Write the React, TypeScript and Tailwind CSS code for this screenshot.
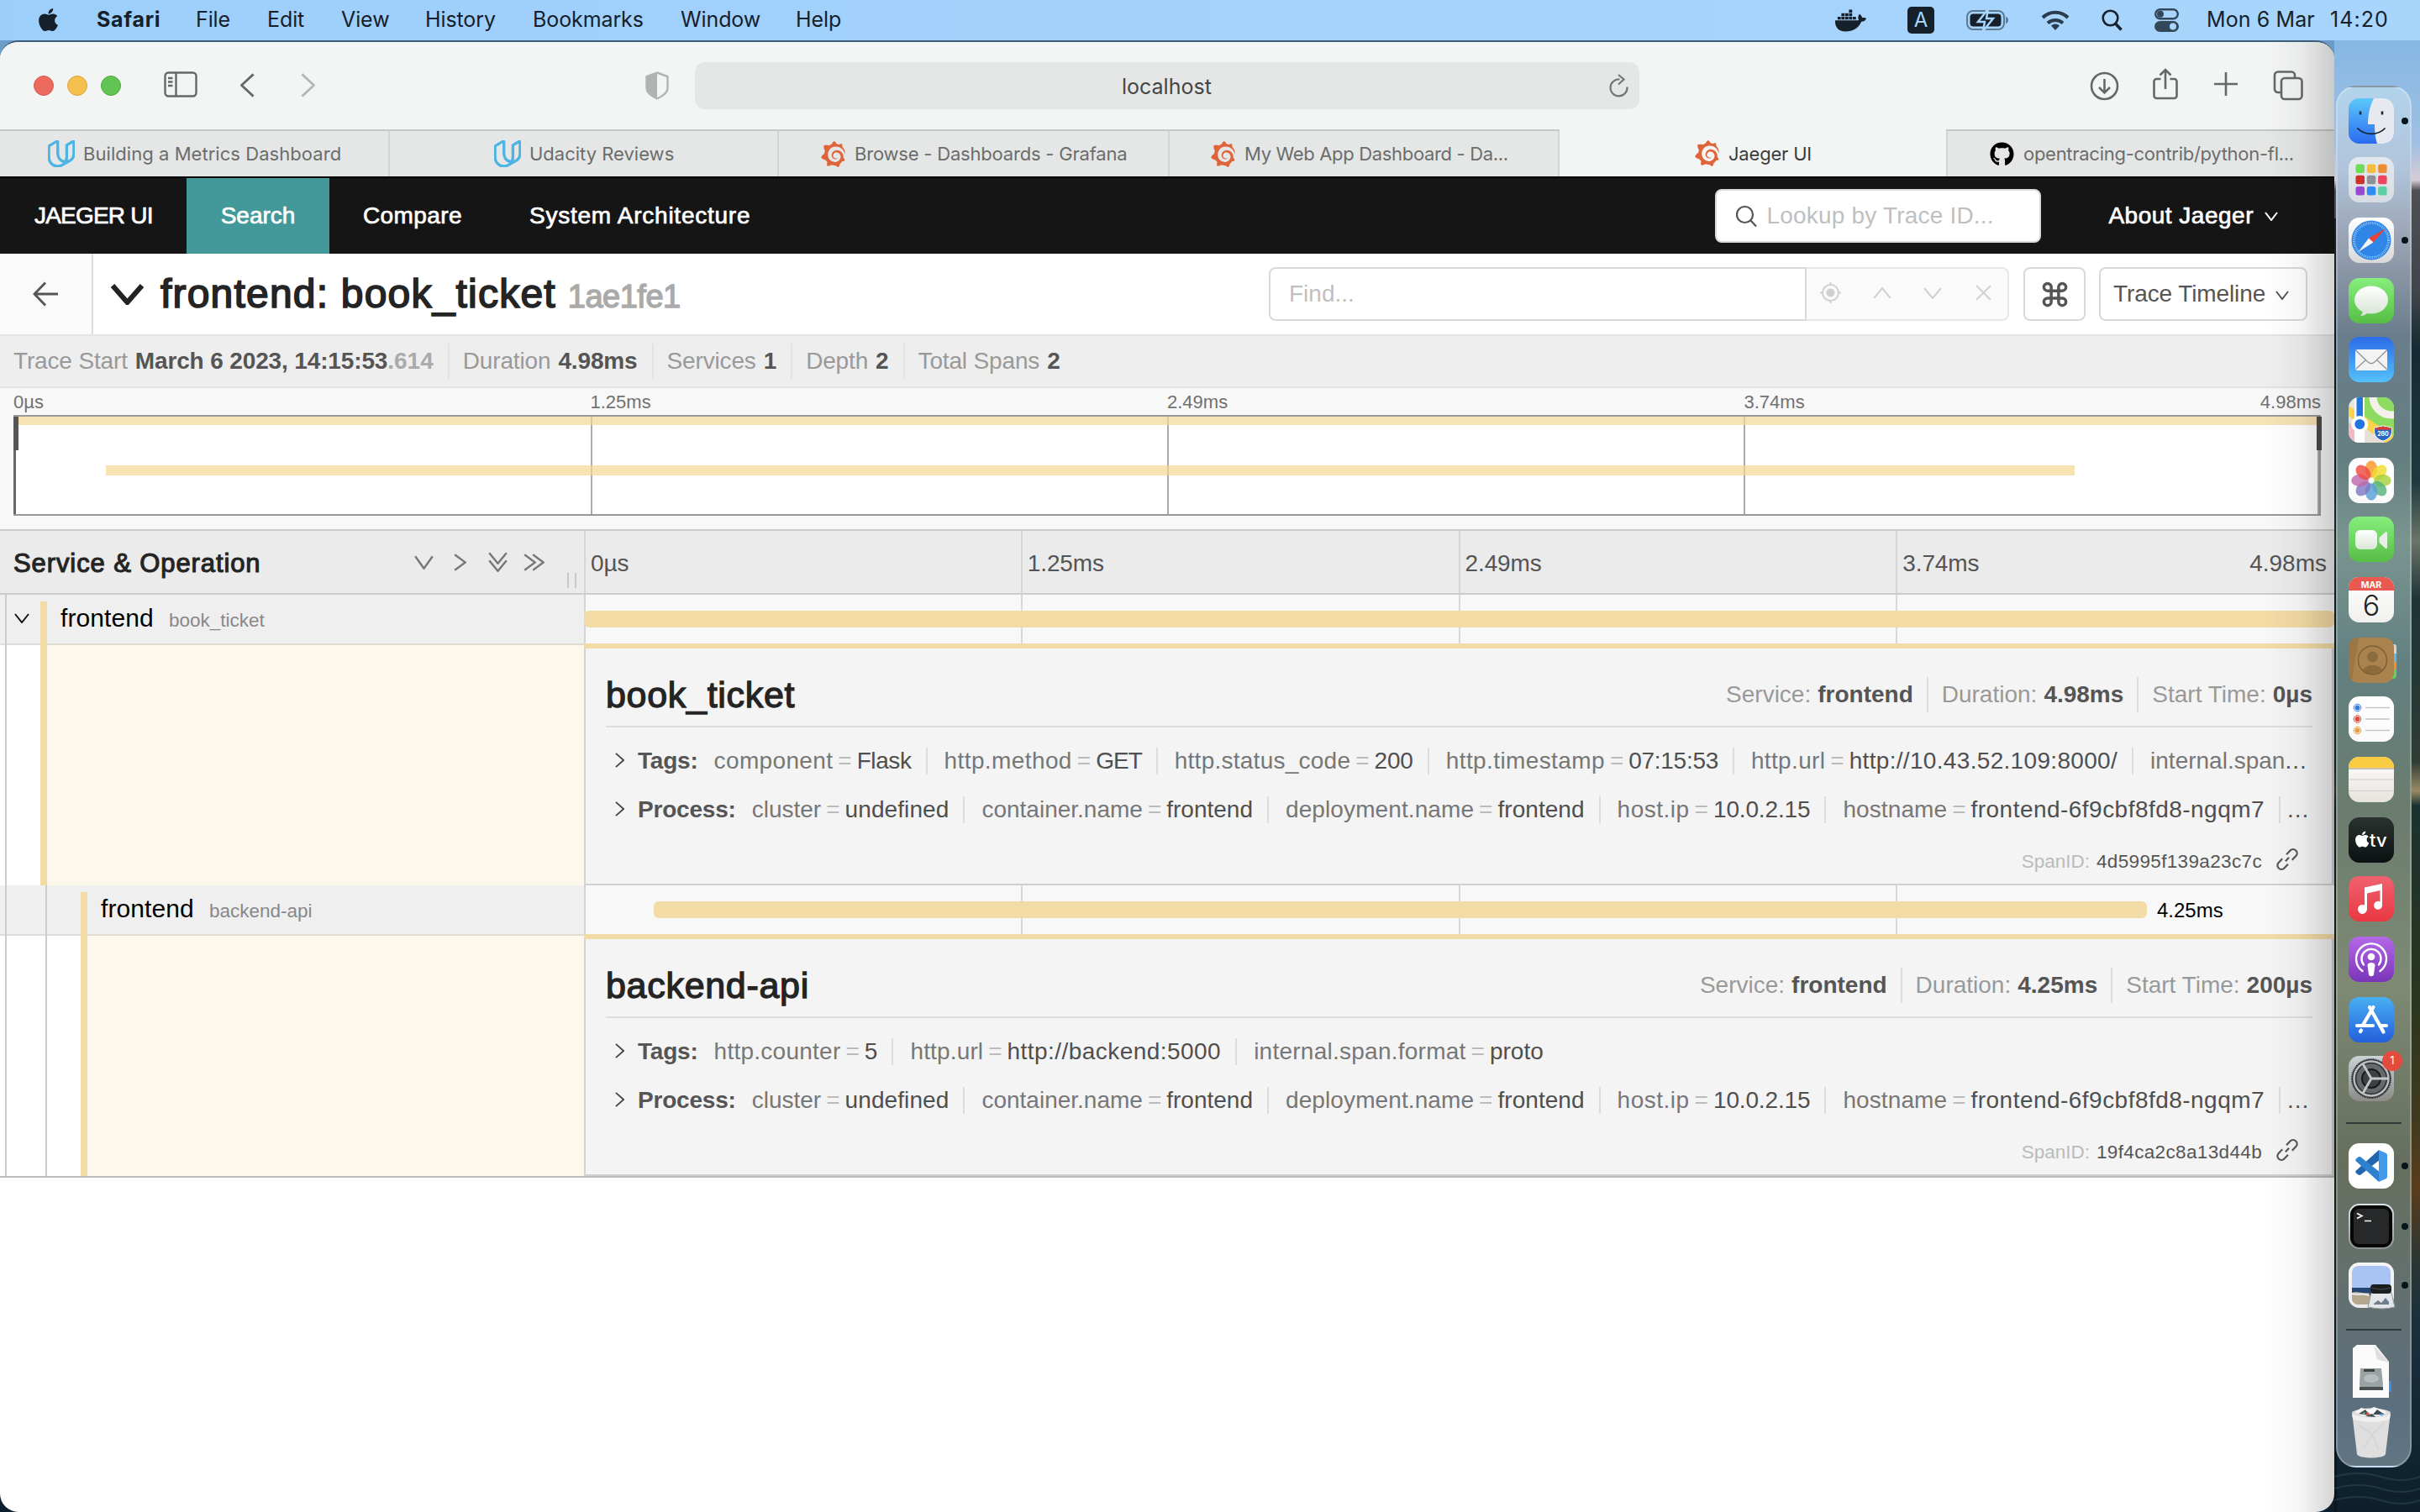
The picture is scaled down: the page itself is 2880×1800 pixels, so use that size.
import React from "react";
import { FaApple, FaDocker, FaGithub } from "react-icons/fa";
import { SiGrafana, SiUdacity } from "react-icons/si";
import { Command } from "lucide-react";

type ChevProps = { d?: "down" | "up" | "right" | "left"; w: number; h: number; s?: number; className?: string };

function Chev({ d = "down", w, h, s = 2, className = "" }: ChevProps) {
  const p = s / 2;
  const paths = {
    down: `M${p} ${p}L${w / 2} ${h - p}L${w - p} ${p}`,
    up: `M${p} ${h - p}L${w / 2} ${p}L${w - p} ${h - p}`,
    right: `M${p} ${p}L${w - p} ${h / 2}L${p} ${h - p}`,
    left: `M${w - p} ${p}L${p} ${h / 2}L${w - p} ${h - p}`,
  };
  return (
    <svg width={w} height={h} viewBox={`0 0 ${w} ${h}`} fill="none" stroke="currentColor" strokeWidth={s} className={`shrink-0 ${className}`}>
      <path d={paths[d]} />
    </svg>
  );
}

/* ---------- macOS menu bar ---------- */

const menus = [
  { t: "File", c: "w-[85px]" },
  { t: "Edit", c: "w-[88px]" },
  { t: "View", c: "w-[100px]" },
  { t: "History", c: "w-[128px]" },
  { t: "Bookmarks", c: "w-[176px]" },
  { t: "Window", c: "w-[137px]" },
  { t: "Help", c: "w-[80px]" },
];

function MenuBar() {
  return (
    <div className="flex h-12 items-center bg-linear-to-r from-[#9dcffb] to-[#a8d5fc] text-[25px] tracking-[-0.1px] text-[#16202a]">
      <FaApple className="mb-0.5 ml-[42px] size-[31px] shrink-0" />
      <span className="ml-[42px] w-[118px] font-bold tracking-[0.7px]">Safari</span>
      {menus.map((m) => (
        <span key={m.t} className={m.c}>{m.t}</span>
      ))}
      <div className="flex flex-1 items-center justify-end pr-[37px]">
        <FaDocker className="mr-[49px] size-[37px]" />
        <span className="mr-[38px] flex h-8 w-8 items-center justify-center rounded-[5px] bg-[#16202a] text-[24px] text-[#a8d5fc]">A</span>
        <svg width="52" height="26" viewBox="0 0 52 26" className="mr-[37px]">
          <rect x="1" y="2" width="44" height="22" rx="7" fill="none" stroke="#5d7a94" strokeWidth="2" />
          <rect x="4.500" y="5.500" width="37" height="15" rx="4" fill="#16202a" />
          <path d="M47 9c4 1 4 7 0 8z" fill="#5d7a94" />
          <path d="M26 0L14 15h8l-2 11 12-15h-8z" fill="#16202a" stroke="#a8d5fc" strokeWidth="2.500" />
        </svg>
        <svg width="34" height="25" viewBox="0 0 34 25" className="mr-[38px]" fill="none" stroke="#2b3c4c" strokeWidth="4">
          <path d="M2 9a21 21 0 0 1 30 0" />
          <path d="M8 15.500a13 13 0 0 1 18 0" />
          <path d="M17 24l-5-5.500a7.500 7.500 0 0 1 10 0z" fill="#2b3c4c" stroke="none" />
        </svg>
        <svg width="25" height="26" viewBox="0 0 25 26" className="mr-[38px]" fill="none" stroke="#16202a">
          <circle cx="10.500" cy="10.500" r="8.800" strokeWidth="2.600" />
          <path d="M16.500 17l7 7.500" strokeWidth="3.400" />
        </svg>
        <svg width="29" height="28" viewBox="0 0 29 28" className="mr-[33px]">
          <rect x="1.200" y="1.200" width="26.600" height="11" rx="5.500" fill="none" stroke="#33475a" strokeWidth="2.400" />
          <circle cx="7" cy="6.700" r="4" fill="#33475a" />
          <rect x="0" y="15" width="29" height="13" rx="6.500" fill="#33475a" />
          <circle cx="22" cy="21.500" r="4" fill="#a8d5fc" />
        </svg>
        <span className="w-[147px] tracking-[0.1px]">Mon 6 Mar</span>
        <span className="tracking-[1.1px]">14:20</span>
      </div>
    </div>
  );
}

/* ---------- Safari chrome ---------- */

function Toolbar() {
  return (
    <div className="flex h-[104px] items-center bg-[#f3f5f4] text-[#666867]">
      <div className="ml-10 flex gap-4">
        <i className="size-6 rounded-full border border-[#d8574d] bg-[#ed6a5f]" />
        <i className="size-6 rounded-full border border-[#dca13c] bg-[#f5bf4f]" />
        <i className="size-6 rounded-full border border-[#50a73e] bg-[#61c554]" />
      </div>
      <svg width="40" height="32" viewBox="0 0 40 32" className="mb-0.5 ml-[51px]" fill="none" stroke="currentColor" strokeWidth="2.400">
        <rect x="1.500" y="1.500" width="37" height="28" rx="4" />
        <path d="M14.500 1.500v28M5 8h5.500M5 12.500h5.500M5 17h5.500" />
      </svg>
      <Chev d="left" w={17} h={29} s={2.8} className="mb-0.5 ml-[51px]" />
      <Chev d="right" w={17} h={29} s={2.8} className="mb-0.5 ml-[55px] text-[#b5b7b6]" />
      <svg width="28" height="34" viewBox="0 0 28 34" className="ml-[393px]">
        <path d="M14 1.500L26.500 6v14c0 6-6 9.500-12.500 12.500C7.500 29.500 1.500 26 1.500 20V6z" fill="none" stroke="#b1b3b2" strokeWidth="2.400" />
        <path d="M14 1.500V32.500C7.500 29.500 1.500 26 1.500 20V6z" fill="#b1b3b2" />
      </svg>
      <div className="ml-[31px] flex h-14 w-[1124px] items-center rounded-xl bg-[#e5e7e6]">
        <span className="ml-[508px] w-[580px] pt-[4px] text-[25px] text-[#444645]">localhost</span>
        <svg width="24" height="28" viewBox="0 0 24 28" fill="none" stroke="#747675" strokeWidth="2.200">
          <path d="M12.500 6.500A10 10 0 1 0 21.500 15.500" />
          <path d="M11 1l6.500 5.500L11 12.500" />
        </svg>
      </div>
      <svg width="35" height="35" viewBox="0 0 35 35" className="ml-[536px]" fill="none" stroke="currentColor" strokeWidth="2.600">
        <circle cx="17.500" cy="17.500" r="15.500" />
        <path d="M17.500 9v16M11 19l6.500 6.500L24 19" />
      </svg>
      <svg width="30" height="38" viewBox="0 0 30 38" className="-mt-1 ml-[40px]" fill="none" stroke="currentColor" strokeWidth="2.600">
        <path d="M9.500 13H4.500a3 3 0 0 0-3 3v17a3 3 0 0 0 3 3h21a3 3 0 0 0 3-3V16a3 3 0 0 0-3-3h-5" />
        <path d="M15 25V2.500M8.500 8.500L15 2l6.500 6.500" />
      </svg>
      <svg width="28" height="28" viewBox="0 0 28 28" className="-mt-1 ml-[43px]" stroke="currentColor" strokeWidth="2.600">
        <path d="M14 0v28M0 14h28" />
      </svg>
      <svg width="36" height="36" viewBox="0 0 36 36" className="ml-[42px]" fill="none" stroke="currentColor" strokeWidth="2.600">
        <rect x="10" y="9" width="24.500" height="25" rx="4" />
        <path d="M10 26H6a4 4 0 0 1-4-4V5.500a4 4 0 0 1 4-4h16a4 4 0 0 1 4 4V9" />
      </svg>
    </div>
  );
}

const tabs = [
  { t: "Building a Metrics Dashboard", i: "u", c: "pl-[57px] tracking-[0.05px]" },
  { t: "Udacity Reviews", i: "u", c: "pl-[124px]" },
  { t: "Browse - Dashboards - Grafana", i: "g", c: "pl-[49px] tracking-[-0.2px]" },
  { t: "My Web App Dashboard - Da...", i: "g", c: "pl-[48px] tracking-[-0.33px]" },
  { t: "Jaeger UI", i: "g", c: "pl-[160px] tracking-[-0.2px]", on: true },
  { t: "opentracing-contrib/python-fl...", i: "h", c: "border-l-2 pl-[50px] tracking-[-0.28px]" },
];

function TabBar() {
  return (
    <div className="grid h-14 grid-cols-[464px_463px_465px_464px_460px_1fr]">
      {tabs.map((t) => (
        <div
          key={t.t}
          className={`flex items-center whitespace-nowrap text-[22px] ${t.c} ${
            t.on
              ? "bg-[#f3f5f4] text-[#3a3c3b]"
              : "border-t-2 border-r-2 border-[#d2d4d3] border-t-[#c4c6c5] bg-[#e5e7e6] text-[#6b6d6c] last:border-r-0"
          }`}
        >
          {t.i === "u" && <SiUdacity className="mr-[10px] size-8 text-[#4cb4e4] [stroke-width:0.9px] [stroke:#4cb4e4]" />}
          {t.i === "g" && <SiGrafana className="mr-[10px] size-[31px] text-[#e0643a]" />}
          {t.i === "h" && <FaGithub className="mr-[11px] size-[29px] text-black" />}
          <span className={t.on ? "pt-[3px]" : "pt-[1px]"}>{t.t}</span>
        </div>
      ))}
    </div>
  );
}

/* ---------- Jaeger ---------- */

function Nav() {
  return (
    <div className="flex h-[92px] items-center border-t-2 border-black bg-[#151515] text-[28px] text-white [-webkit-text-stroke:0.7px_white]">
      <span className="ml-[41px] w-[181px] tracking-[-0.8px]">JAEGER UI</span>
      <span className="flex h-full w-[170px] items-center justify-center bg-[#439999]">Search</span>
      <span className="ml-[40px] tracking-[0.4px]">Compare</span>
      <span className="ml-[80px] tracking-[0.75px]">System Architecture</span>
      <div className="ml-auto flex h-16 w-[388px] items-center rounded-lg border-2 border-[#d9d9d9] bg-white pl-[22px] [-webkit-text-stroke:0]">
        <svg width="27" height="27" viewBox="0 0 27 27" fill="none" stroke="#555" strokeWidth="2.200">
          <circle cx="11.500" cy="11.500" r="9.500" />
          <path d="M18.500 18.500l6.500 7" />
        </svg>
        <span className="ml-[10px] tracking-[0.2px] text-[#bfbfbf]">Lookup by Trace ID...</span>
      </div>
      <span className="ml-[80px] tracking-[0.5px]">About Jaeger</span>
      <Chev w={16} h={11} s={2} className="mr-[67px] ml-[13px]" />
    </div>
  );
}

function TitleRow() {
  return (
    <div className="flex h-[98px] items-center border-b-2 border-[#e4e4e4] bg-white text-[28px] text-[#555]">
      <div className="flex h-full w-[111px] items-center justify-center border-r-2 border-[#ddd] bg-[#fafafa]">
        <svg width="31" height="30" viewBox="0 0 31 30" fill="none" stroke="#555" strokeWidth="2.800">
          <path d="M30 15H2M15 1.500L2 15l13 13.500" />
        </svg>
      </div>
      <Chev w={41} h={26} s={6} className="ml-[20px] text-[#222]" />
      <span className="ml-[19px] text-[48px] tracking-[1.2px] text-[#242424] [-webkit-text-stroke:1.7px_#242424]">frontend: book_ticket</span>
      <span className="ml-[14px] pt-[7px] text-[38px] tracking-[-0.5px] text-[#aaa] [-webkit-text-stroke:1.4px_#aaa]">1ae1fe1</span>
      <div className="ml-auto flex h-16 w-[640px] items-center rounded-l-lg border-2 border-[#d9d9d9] pl-[22px] text-[#bfbfbf]">Find...</div>
      <div className="flex h-16 w-[241px] items-center rounded-r-lg border-y-2 border-r-2 border-[#e8e8e8] bg-[#fafafa] pl-[16px] text-[#d0d0d0]">
        <svg width="25" height="25" viewBox="0 0 25 25" fill="none" stroke="currentColor" strokeWidth="2" className="mb-[3px]">
          <circle cx="12.500" cy="12.500" r="9.500" />
          <circle cx="12.500" cy="12.500" r="4" fill="currentColor" />
          <path d="M12.500 0v4M12.500 21v4M0 12.500h4M21 12.500h4" />
        </svg>
        <Chev d="up" w={22} h={14} s={2.2} className="mb-[3px] ml-[38px]" />
        <Chev w={22} h={14} s={2.2} className="mb-[2px] ml-[38px]" />
        <svg width="19" height="19" viewBox="0 0 19 19" stroke="currentColor" strokeWidth="2" className="mb-[3px] ml-[40px]">
          <path d="M1 1l17 17M18 1L1 18" />
        </svg>
      </div>
      <div className="ml-[17px] flex h-16 w-[74px] items-center justify-center rounded-lg border-2 border-[#d9d9d9]">
        <Command size={35} strokeWidth={2.4} />
      </div>
      <div className="mr-[32px] ml-[16px] flex h-16 w-[248px] items-center rounded-lg border-2 border-[#d9d9d9] pl-[15px] tracking-[-0.1px]">
        Trace Timeline
        <Chev w={16} h={11} s={2} className="mt-0.5 ml-[12px]" />
      </div>
    </div>
  );
}

const summary = [
  { k: "Trace Start", v: "March 6 2023, 14:15:53", x: ".614" },
  { k: "Duration", v: "4.98ms" },
  { k: "Services", v: "1" },
  { k: "Depth", v: "2" },
  { k: "Total Spans", v: "2" },
];

function Summary() {
  return (
    <div className="flex h-[62px] items-center border-b-2 border-[#e2e2e2] bg-[#eee] pl-4 text-[28px]">
      {summary.map((s, i) => (
        <div key={s.k} className={`flex whitespace-pre ${i < 4 ? "mr-4 border-r-2 border-[#e2e2e2] pr-[17px]" : ""}`}>
          <span className="mr-[9px] tracking-[-0.15px] text-[#999]">{s.k}</span>
          <b className="tracking-[-0.14px] text-[#555]">{s.v}</b>
          {s.x && <b className="text-[#aaa]">{s.x}</b>}
        </div>
      ))}
    </div>
  );
}

const ticks = ["0µs", "1.25ms", "2.49ms", "3.74ms"];

function Minimap() {
  return (
    <div className="h-[170px] border-b-2 border-[#ccc] bg-[#f8f8f8] px-4">
      <div className="grid h-8 grid-cols-4 items-center text-[22px] text-[#717171]">
        {ticks.map((t, i) => (
          <div key={t} className="flex justify-between">
            <span>{t}</span>
            {i === 3 && <span>4.98ms</span>}
          </div>
        ))}
      </div>
      <div className="relative grid h-[120px] grid-cols-[687px_686px_686px_1fr] border-2 border-[#999] bg-white">
        {ticks.map((t) => (
          <div key={t} className="border-r-2 border-[#aaa] last:border-r-[#555]" />
        ))}
        <div className="absolute inset-x-0 top-0 h-[10px] bg-[#f3d594]/70" />
        <div className="absolute top-[58px] left-[108px] h-[12px] w-[2343px] bg-[#f3d594]/70" />
        <div className="absolute top-0 -left-0.5 h-full w-[3px] bg-[#666]" />
        <div className="absolute top-0 -left-0.5 h-10 w-[6px] bg-[#555]" />
        <div className="absolute top-0 -right-[3px] h-10 w-[6px] bg-[#4c4c4c]" />
      </div>
    </div>
  );
}

function Ticks() {
  return (
    <div className="absolute inset-0 grid grid-cols-4">
      <i className="border-r-2 border-[#d8d8d8]" />
      <i className="border-r-2 border-[#d8d8d8]" />
      <i className="border-r-2 border-[#d8d8d8]" />
    </div>
  );
}

function TimelineHeader() {
  return (
    <div className="flex h-[76px] border-b-2 border-[#ccc] bg-[#ebebeb]">
      <div className="relative flex w-[695px] items-center pl-4 text-[#777]">
        <span className="w-[477px] pt-[5px] text-[31px] tracking-[0.9px] text-[#242424] [-webkit-text-stroke:1.1px_#242424]">Service &amp; Operation</span>
        <Chev w={23} h={17} s={2.4} />
        <Chev d="right" w={15} h={21} s={2.4} className="ml-[24px]" />
        <span className="ml-[26px] flex flex-col">
          <Chev w={23} h={15} s={2.4} />
          <Chev w={23} h={15} s={2.4} className="-mt-[6px]" />
        </span>
        <span className="ml-[19px] flex">
          <Chev d="right" w={15} h={21} s={2.4} />
          <Chev d="right" w={15} h={21} s={2.4} className="-ml-[5px]" />
        </span>
        <i className="absolute right-[9px] bottom-[6px] h-[18px] w-[11px] border-x-2 border-[#c8c8c8]" />
      </div>
      <div className="grid flex-1 grid-cols-4 text-[28px] text-[#555]">
        {ticks.map((t, i) => (
          <div key={t} className="-ml-px flex items-center justify-between border-l-2 border-[#d5d5d5] pt-[4px] pr-[9px] pl-[6px] first:ml-0">
            <span className="tracking-[-0.1px]">{t}</span>
            {i === 3 && <span>4.98ms</span>}
          </div>
        ))}
      </div>
    </div>
  );
}

type KV = { k: string; v: string; kc?: string; vc?: string };

function Line({ label, items, tail }: { label: string; items: KV[]; tail?: React.ReactNode }) {
  return (
    <div className="flex h-[58px] items-center whitespace-nowrap text-[28px]">
      <Chev d="right" w={11} h={18} s={1.8} className="mb-[2px] ml-[11px] text-[#444]" />
      <b className="ml-[16px] tracking-[-0.2px] text-[#555]">{label}</b>
      <div className="ml-[19px] flex">
        {items.map(({ k, v, kc = "", vc = "" }, i) => (
          <div
            key={k}
            className={`flex h-8 items-center ${i < items.length - 1 || tail ? "border-r-2 border-[#ddd] pr-[17px]" : ""} ${i ? "pl-[20px]" : ""}`}
          >
            <span className={`text-[#777] ${kc}`}>{k}</span>
            <span className="mx-[6px] text-[#bbb]">=</span>
            <span className={`text-[#4f4f4f] ${vc}`}>{v}</span>
          </div>
        ))}
      </div>
      {tail}
    </div>
  );
}

type SpanProps = {
  name: string;
  duration: string;
  start: string;
  tags: KV[];
  tagsTail?: React.ReactNode;
  id: string;
  child?: boolean;
};

const processTags: KV[] = [
  { k: "cluster", v: "undefined", vc: "tracking-[0.1px]" },
  { k: "container.name", v: "frontend" },
  { k: "deployment.name", v: "frontend", kc: "tracking-[0.1px]", vc: "tracking-[0.05px]" },
  { k: "host.ip", v: "10.0.2.15", kc: "tracking-[0.5px]", vc: "tracking-[-0.15px]" },
  { k: "hostname", v: "frontend-6f9cbf8fd8-ngqm7", kc: "tracking-[0.1px]", vc: "tracking-[0.47px]" },
];

function Meta({ k, v, last }: { k: string; v: string; last?: boolean }) {
  return (
    <div className={`flex ${last ? "" : "mr-4 border-r-2 border-[#ddd] pr-[16px]"}`}>
      <span className="mr-[8px] text-[#999]">{k}</span>
      <b className="text-[#555]">{v}</b>
    </div>
  );
}

function SpanBlock({ name, duration, start, tags, tagsTail, id, child }: SpanProps) {
  return (
    <div className="flex h-[346px]">
      {/* tree column */}
      <div className="flex w-[695px] bg-[linear-gradient(#efefef_58px,#dddddd_58px,#dddddd_60px,#ffffff_60px)]">
        <i className="ml-[6px] w-[2px] bg-[#ccc]" />
        {child ? (
          <>
            <i className="ml-[46px] w-[2px] bg-[#ccc]" />
            <i className="mt-2 ml-[40px] w-2 bg-[#f3dba5]" />
          </>
        ) : (
          <>
            <div className="flex w-[40px] items-start justify-center pt-[22px] pr-[5px]">
              <Chev w={18} h={12} s={2} className="text-[#111]" />
            </div>
            <i className="mt-2 w-2 bg-[#f3dba5]" />
          </>
        )}
        <div className="flex flex-1 flex-col">
          <div className="flex h-[58px] items-baseline pt-[5px] pl-[16px]">
            <span className="text-[30px] tracking-[0.1px] text-black">frontend</span>
            <span className="ml-[18px] text-[22.500px] text-[#888]">{name}</span>
          </div>
          <div className="flex-1 border-t-2 border-[#dfdbcf] bg-[#fdf8ec]" />
        </div>
      </div>
      {/* timeline column */}
      <div className="flex min-w-0 flex-1 flex-col border-l-2 border-[#d3d3d3]">
        <div className="relative flex h-[58px] items-center bg-[#f8f8f8]">
          <Ticks />
          {child ? (
            <>
              <div className="relative ml-[81px] h-5 w-[1777px] rounded-[6px] bg-[#f3dba5]" />
              <span className="relative ml-[12px] pt-[2px] text-[24px] text-black">{duration}</span>
            </>
          ) : (
            <div className="relative -ml-0.5 h-5 flex-1 rounded-[6px] bg-[#f3dba5]" />
          )}
        </div>
        <div className="-ml-0.5 h-[6px] bg-[#f3dba5]" />
        <div className="flex flex-1 flex-col border-r-[3px] border-b-2 border-[#d0d0d0] bg-[#f4f4f4] pt-[18px] pr-[23px] pl-[24px]">
          <div className="flex h-[76px] items-center justify-between border-b-2 border-[#ddd]">
            <span className="text-[43px] tracking-[0.7px] text-[#242424] [-webkit-text-stroke:1.3px_#242424]">{name}</span>
            <div className="flex text-[28px]">
              <Meta k="Service:" v="frontend" />
              <Meta k="Duration:" v={duration} />
              <Meta k="Start Time:" v={start} last />
            </div>
          </div>
          <div className="mt-[11px]">
            <Line label="Tags:" items={tags} tail={tagsTail} />
            <Line label="Process:" items={processTags} tail={<span className="ml-[8px] tracking-[1px] text-[#555]">...</span>} />
          </div>
          <div className="flex flex-1 items-center justify-end pt-[6px] pr-[17px] text-[22.500px]">
            <span className="text-[#bbb]">SpanID:</span>
            <span className="ml-[8px] tracking-[0.35px] text-[#555]">{id}</span>
            <svg width="26" height="26" viewBox="0 0 26 26" fill="none" stroke="#555" strokeWidth="2.200" className="mb-1.5 ml-[17px] overflow-visible">
              <g transform="rotate(-46 13 13)">
                <path d="M9.500 8.300H3a4.700 4.700 0 0 0 0 9.400h6.500M16.500 8.300H23a4.700 4.700 0 0 1 0 9.400h-6.500M10 13h6" />
              </g>
            </svg>
          </div>
        </div>
      </div>
    </div>
  );
}

/* ---------- Dock ---------- */

function Tile({ id, from, to, children }: { id: string; from: string; to: string; children?: React.ReactNode }) {
  return (
    <svg width="54" height="54" viewBox="0 0 54 54" className="block overflow-visible">
      <defs>
        <linearGradient id={id} x1="0" y1="0" x2="0" y2="1">
          <stop offset="0" stopColor={from} />
          <stop offset="1" stopColor={to} />
        </linearGradient>
        <clipPath id={`${id}-c`}>
          <rect width="54" height="54" rx="12.500" />
        </clipPath>
        <linearGradient id={`${id}-w`} x1="0" y1="0" x2="0" y2="1">
          <stop offset="0" stopColor="#fff" />
          <stop offset="1" stopColor="#d9e6d6" />
        </linearGradient>
      </defs>
      <rect width="54" height="54" rx="12.500" fill={`url(#${id})`} />
      <g clipPath={`url(#${id}-c)`}>{children}</g>
    </svg>
  );
}

const pad = ["#6fdc55", "#f5bd3f", "#ec8e33", "#d0302a", "#8e9295", "#ef4660", "#9a48cf", "#2f8cf5", "#5dcfa4"];
const petals = ["#f5962a", "#f0dc2c", "#a9cf3e", "#55b578", "#5a9fdc", "#7f77c2", "#c069ab", "#ee4a3f"];

function DockIcons() {
  const dot = <i className="absolute top-[23px] -right-[17px] size-2 rounded-full bg-[#06141d]" />;
  return (
    <>
      <div className="relative mt-[13px]">
        <Tile id="finder" from="#5cc8fa" to="#2a6af0">
          <path d="M30 0c-5 10-7 20-7 31h8c0 8 .500 16 3 23h20V0z" fill="#e6e9f0" />
          <path d="M14 15.500v4M40 15.500v4" stroke="#1b2836" strokeWidth="2.600" />
          <path d="M11 36c8 8.500 24 8.500 32 0" fill="none" stroke="#15202c" strokeWidth="1.800" strokeLinecap="round" />
        </Tile>
        {dot}
      </div>
      <div className="mt-4">
        <Tile id="pad" from="#e4e9ef" to="#d7dbe2">
          {pad.map((c, i) => (
            <rect key={c} x={8.500 + (i % 3) * 13.300} y={8.500 + Math.floor(i / 3) * 13.300} width="10.500" height="10.500" rx="2.500" fill={c} />
          ))}
        </Tile>
      </div>
      <div className="relative mt-[17.500px]">
        <Tile id="saf" from="#ffffff" to="#d8d8d8">
          <circle cx="27" cy="27" r="23.500" fill="#2f86e6" />
          <circle cx="27" cy="27" r="20.500" fill="none" stroke="#b9d9f8" strokeWidth="3" strokeDasharray="0.700 1.450" />
          <path d="M44 13L24 24.500l5.500 5z" fill="#ee4035" />
          <path d="M11.500 41L24 24.500l5.500 5z" fill="#f4f4f4" />
        </Tile>
        {dot}
      </div>
      <div className="mt-[18px]">
        <Tile id="msg" from="#86ef7d" to="#56bd45">
          <ellipse cx="27" cy="26" rx="20" ry="16.500" fill="url(#msg-w)" />
          <path d="M17 37c0 4-1 6-3 8 4 0 8-2 10-5z" fill="#d9e6d6" />
        </Tile>
      </div>
      <div className="mt-4">
        <Tile id="mail" from="#2b6ce8" to="#55c1f9">
          <rect x="8" y="15" width="38" height="25" rx="2.500" fill="#f3f3f3" />
          <path d="M8.500 38.500L21 27M45.500 38.500L33 27M8.500 16l14 13.500c3 3 6 3 9 0L45.500 16" fill="none" stroke="#8d9296" strokeWidth="1.200" />
        </Tile>
      </div>
      <div className="mt-[18px]">
        <Tile id="map" from="#e9e5dc" to="#e4e0d8">
          <path d="M16 0h38v54L16 24z" fill="#8edb62" />
          <circle cx="51" cy="-1" r="22" fill="none" stroke="#f3f1ea" strokeWidth="9" />
          <path d="M0 30v24h7V34z" fill="#f4b8c4" />
          <path d="M0 10L54 46v10h-8L0 22z" fill="#fbd34a" />
          <path d="M7 0h12v54H7z" fill="#fff" />
          <path d="M9.500 0h7.500v26H9.500z" fill="#2175e0" />
          <circle cx="13.300" cy="32" r="10" fill="#fff" />
          <circle cx="13.300" cy="32" r="6" fill="#2175e0" />
          <path d="M31 36l10-2 10 2c2 8-2 14-10 16-8-2-12-8-10-16z" fill="#2b66c2" stroke="#fff" strokeWidth="1" />
          <path d="M31.500 36.500l9.500-2 9.500 2v2h-19z" fill="#dc3b34" />
          <text x="41" y="46" textAnchor="middle" fontSize="7" fontWeight="700" fill="#fff" fontFamily="Inter, sans-serif">280</text>
        </Tile>
      </div>
      <div className="mt-[18px]">
        <Tile id="photos" from="#ffffff" to="#fafafa">
          {petals.map((c, i) => (
            <ellipse key={c} cx="27" cy="13.500" rx="7.200" ry="10.300" fill={c} opacity="0.820" transform={`rotate(${i * 45} 27 27)`} />
          ))}
        </Tile>
      </div>
      <div className="mt-4">
        <Tile id="ft" from="#86ef7d" to="#56bd45">
          <rect x="8" y="16" width="26" height="23" rx="6" fill="url(#ft-w)" />
          <path d="M36.500 25l7-6.500c1-1 2.500-.500 2.500 1v17c0 1.500-1.500 2-2.500 1l-7-6.500z" fill="#e7f0e5" />
        </Tile>
      </div>
      <div className="mt-[18px]">
        <Tile id="cal" from="#ffffff" to="#f1f0ee">
          <rect width="54" height="16" fill="#e9594f" />
          <text x="27" y="12.500" textAnchor="middle" fontSize="10.500" fontWeight="700" fill="#fff" fontFamily="Inter, sans-serif">MAR</text>
          <text x="27" y="45.500" textAnchor="middle" fontSize="34" fontWeight="300" fill="#222" fontFamily="Inter, sans-serif">6</text>
        </Tile>
      </div>
      <div className="mt-[18px]">
        <svg width="58" height="54" viewBox="0 0 58 54" className="-mr-1 block">
          <path d="M50 8h5q2 0 2 4v7h-7z" fill="#d4d4d4" />
          <path d="M50 19h7v10h-7z" fill="#5db8ee" />
          <path d="M50 29h7v9h-7z" fill="#f0902e" />
          <path d="M50 38h7v6q0 4-3 5h-4z" fill="#5fd35c" />
          <rect width="54" height="54" rx="12" fill="#a9824e" />
          <path d="M12 0A12 12 0 0 0 0 12v30a12 12 0 0 0 4 9z" fill="#8f6b3a" opacity="0.500" />
          <circle cx="28.500" cy="27" r="17" fill="none" stroke="#7f6034" strokeWidth="1.400" />
          <circle cx="28.500" cy="23" r="6.300" fill="#7f6034" opacity="0.700" />
          <path d="M16.500 38.500c5-7.500 19-7.500 24 0a17 17 0 0 1-24 0z" fill="#7f6034" opacity="0.700" />
        </svg>
      </div>
      <div className="mt-4">
        <Tile id="rem" from="#ffffff" to="#fafafa">
          {["#2c7cf0", "#e6453a", "#ee9b35"].map((c, i) => (
            <g key={c}>
              <circle cx="10.500" cy={13.500 + i * 13.500} r="4.300" fill="none" stroke={c} strokeWidth="1" />
              <circle cx="10.500" cy={13.500 + i * 13.500} r="2.900" fill={c} />
              <path d={`M20 ${13.500 + i * 13.500}h29`} stroke="#c3c5c8" strokeWidth="1.300" />
            </g>
          ))}
        </Tile>
      </div>
      <div className="mt-[18px]">
        <Tile id="notes" from="#ffffff" to="#e6e3dd">
          <rect width="54" height="13.500" fill="#f8cb42" />
          <path d="M0 14.200h54" stroke="#b9b6b0" strokeWidth="1.400" />
          <path d="M0 27h54M0 40.500h54" stroke="#cfccc6" strokeWidth="1" />
        </Tile>
      </div>
      <div className="mt-[18px]">
        <Tile id="tv" from="#2a332f" to="#0c1012">
          <svg x="7" y="15" width="18" height="22" viewBox="0 0 376 512">
            <path fill="#fff" d="M318.700 268.700c-.2-36.700 16.400-64.400 50-84.800-18.800-26.900-47.200-41.700-84.700-44.600-35.500-2.800-74.300 20.700-88.500 20.700-15 0-49.400-19.700-76.400-19.700C63.300 141.200 4 184.800 4 273.500q0 39.300 14.400 81.200c12.800 36.700 59 126.700 107.200 125.200 25.200-.6 43-17.900 75.800-17.900 31.800 0 48.300 17.900 76.400 17.900 48.600-.7 90.400-82.500 102.600-119.300-65.200-30.700-61.700-90-61.700-91.900zm-56.600-164.200c27.300-32.400 24.800-61.900 24-72.500-24.100 1.400-52 16.400-67.900 34.900-17.500 19.800-27.800 44.300-25.600 71.900 26.100 2 49.900-11.400 69.500-34.300z" />
          </svg>
          <text x="25" y="35" fontSize="22" fontWeight="500" fill="#fff" fontFamily="Inter, sans-serif">tv</text>
        </Tile>
      </div>
      <div className="mt-4">
        <Tile id="music" from="#f0626f" to="#e93842">
          <path d="M19 13.500L40 9v25.500a5 5 0 1 1-2.500-4V17L22 20.500V39a5.500 5.500 0 1 1-3-4.500z" fill="#fff" />
        </Tile>
      </div>
      <div className="mt-[18px]">
        <Tile id="pod" from="#b568e8" to="#7a35b8">
          <g fill="none" stroke="#fff" strokeWidth="2.400" strokeLinecap="round">
            <path d="M16.500 41a18 18 0 1 1 21 0" />
            <path d="M18 33.500a11.500 11.500 0 1 1 18 0" />
          </g>
          <circle cx="27" cy="24" r="4.300" fill="#fff" />
          <path d="M22.500 34c0-4 9-4 9 0l-1.500 11c-.500 3-5.500 3-6 0z" fill="#fff" />
        </Tile>
      </div>
      <div className="mt-[18px]">
        <Tile id="store" from="#48b0f2" to="#235fdb">
          <g stroke="#fff" strokeWidth="4.200" strokeLinecap="round">
            <path d="M29.500 12L17.500 32.500M14 41l1-1.500M25 12l16.500 29.500M10 34h19M38 34h7" />
          </g>
        </Tile>
      </div>
      <div className="relative mt-4">
        <Tile id="set" from="#c9d2d5" to="#8c8b88">
          <circle cx="27" cy="27" r="23" fill="#34373a" />
          <circle cx="27" cy="27" r="20.500" fill="none" stroke="#b9bcbd" strokeWidth="2.500" />
          <circle cx="27" cy="27" r="17.500" fill="#66696b" />
          <circle cx="27" cy="27" r="11" fill="#3e4143" stroke="#17191a" strokeWidth="2" />
          <circle cx="27" cy="27" r="23" fill="none" stroke="#24272a" strokeWidth="2" strokeDasharray="1 1" />
          <path d="M27 27h20M27 27L17 9.500M27 27L17 44.500" stroke="#c4c7c8" strokeWidth="2.800" />
        </Tile>
        <span className="absolute -top-1.5 -right-[10px] flex size-6 items-center justify-center rounded-full bg-[#e44b3d] text-[13px] text-white">1</span>
      </div>
      <i className="mt-[25px] -ml-[3px] h-0.5 w-[66px] shrink-0 bg-[#2f3b38]" />
      <div className="relative mt-[23px]">
        <Tile id="vs" from="#ffffff" to="#ffffff">
          <path d="M36 8L9 32.500c-1 1-1 2 0 3l2.500 2c1 .700 2 .500 3 0L38 19z" fill="#2466ad" />
          <path d="M36 46L9 21.500c-1-1-1-2 0-3l2.500-2c1-.700 2-.500 3 0L38 35z" fill="#2f80cf" />
          <path d="M36 8l8 3.500c1.200.600 2 1.500 2 3v25c0 1.500-.800 2.400-2 3L36 46z" fill="#419bea" />
        </Tile>
        {dot}
      </div>
      <div className="relative mt-[18px]">
        <Tile id="term" from="#d7e4ea" to="#8f9293">
          <rect x="2" y="2" width="50" height="50" rx="11" fill="#060606" />
          <rect x="6" y="6" width="42" height="42" rx="6" fill="#262829" />
          <path d="M10 11.500l6 3-6 3M19 20.500h8" fill="none" stroke="#fff" strokeWidth="1.600" />
        </Tile>
        {dot}
      </div>
      <div className="relative mt-[16px]">
        <Tile id="prev" from="#f5f5f7" to="#ececee">
          <rect x="4" y="4" width="46" height="46" rx="8" fill="#a9c4f2" />
          <path d="M4 30h46v9H4z" fill="#23456f" />
          <path d="M4 36c8-3 12 2 20 0l8 14H12q-8 0-8-8z" fill="#b7a78e" />
          <path d="M4 37c6 2 12-1 20 2" stroke="#eef2f5" strokeWidth="2" fill="none" />
        </Tile>
        <svg width="34" height="32" viewBox="0 0 34 32" className="absolute -right-[2px] -bottom-[2px]">
          <path d="M5 12h24l4 17q-15 4-32 0z" fill="#e3e6e9" stroke="#8f9498" strokeWidth="1" />
          <path d="M8 25l5-4 4 3 5-6 4 5v3H8z" fill="#6f7d8d" />
          <rect x="4" y="2" width="25" height="11" rx="4" fill="#1b1d1f" />
          <path d="M5 6q12 4 23 0" stroke="#4a4d50" strokeWidth="1" fill="none" />
        </svg>
        {dot}
      </div>
      <i className="mt-[25px] -ml-[3px] h-0.5 w-[66px] shrink-0 bg-[#2c3a3e]" />
      <svg width="54" height="66" viewBox="0 0 54 66" className="mt-[16px] block shrink-0">
        <path d="M5 5l5-4h22l16 20v43H5z" fill="#fbfbfb" />
        <path d="M30 2l18 20-12-3c-4-1-3-8-6-17z" fill="#dedede" />
        <path d="M48 44h2.500v13H48z" fill="#3a97ea" />
        <path d="M14 29h25l2 19-1 7H14l-1-7z" fill="#9aa3a4" />
        <path d="M13 51h28v4H13z" fill="#4a5153" />
        <path d="M18 30h13v3H18z" fill="#3d4446" />
        <ellipse cx="27" cy="41" rx="9" ry="5" fill="#b5bdbe" />
      </svg>
      <svg width="54" height="64" viewBox="0 0 54 64" className="mt-[8px] block shrink-0">
        <path d="M4 7c10-6 36-6 46 0l-6 50c-1 6-33 6-34 0z" fill="#dedede" />
        <path d="M8 7l7-5 9 2 6-3 9 3 6 3-5 5-12-2-10 2z" fill="#f7f7f7" />
        <path d="M12 9l8-5 5 7zM29 10l5-6 9 6zM20 12l8-3 4 4z" fill="#3f4b54" />
        <path d="M22 6l4 4-5 1z" fill="#e0584f" />
        <path d="M36 10l6-2-2 4z" fill="#5a9fdc" />
        <path d="M16 8l4-1-1 4z" fill="#67b06a" />
        <path d="M4 9c8 6 38 6 46 0l-1 6c-8 5-36 5-44 0z" fill="#f3f3f3" opacity="0.850" />
        <path d="M12 22l16 12-10 16M42 20L28 34l8 18" stroke="#cfcfcf" strokeWidth="1.500" fill="none" opacity="0.700" />
      </svg>
    </>
  );
}

function Desktop() {
  return (
    <div className="relative w-[102px] overflow-hidden">
      <svg width="102" height="1752" viewBox="0 48 102 1752" className="absolute inset-0" preserveAspectRatio="none">
        <defs>
          <linearGradient id="land" x1="0" y1="0" x2="0" y2="1">
            <stop offset="0" stopColor="#86b7e4" />
            <stop offset="0.070" stopColor="#9fc0e2" />
            <stop offset="0.095" stopColor="#d8cbd5" />
            <stop offset="0.102" stopColor="#4d4f55" />
            <stop offset="0.170" stopColor="#41464b" />
            <stop offset="0.210" stopColor="#142a33" />
            <stop offset="0.300" stopColor="#1f3a3e" />
            <stop offset="0.340" stopColor="#6b7468" />
            <stop offset="0.380" stopColor="#1e3436" />
            <stop offset="0.490" stopColor="#2e3c34" />
            <stop offset="0.510" stopColor="#9a8a63" />
            <stop offset="0.520" stopColor="#1c3130" />
            <stop offset="0.640" stopColor="#28351f" />
            <stop offset="0.730" stopColor="#3f3a1e" />
            <stop offset="0.780" stopColor="#5a3c1c" />
            <stop offset="0.830" stopColor="#2a3634" />
            <stop offset="0.870" stopColor="#1b2f3c" />
            <stop offset="1" stopColor="#0d1f2d" />
          </linearGradient>
        </defs>
        <rect y="48" width="102" height="1752" fill="url(#land)" />
        <path d="M0 260h3v1540H0z" fill="#0a1418" opacity="0.800" />
        <path d="M0 1758q30-8 55 0t47 0M0 1772q30-8 55 0t47 0M0 1786q30-8 55 0t47 0" stroke="#4d6675" strokeWidth="2" fill="none" opacity="0.300" />
      </svg>
      <div className="relative mt-[54px] ml-0.5 flex h-[1645px] w-[90px] flex-col items-start rounded-3xl border-2 border-white/25 bg-[linear-gradient(#b3d3ec,#b0c4da_6%,#9aa3b4_11%,#6a7d8c_18%,#647f80_27%,#7a9590_33%,#628081_42%,#6a7c6e_52%,#7e8a74_65%,#666f5e_78%,#64706c_86%,#5c6f7f_96%,#627583)] pl-[13px]">
        <DockIcons />
      </div>
    </div>
  );
}

export default function App() {
  return (
    <div className="flex h-[1800px] w-[2880px] flex-col overflow-hidden bg-[#4f86b8] font-[Inter,sans-serif]">
      <MenuBar />
      <div className="flex flex-1">
        <div className="flex w-[2778px] flex-col bg-linear-to-b from-[#6d9ccb] to-[#0d1f2d]">
          <div className="relative flex flex-1 flex-col overflow-hidden rounded-[22px] border-t-2 border-[#3d5c78] bg-white">
            <Toolbar />
            <TabBar />
            <div className="flex flex-1 flex-col font-['Liberation_Sans',Arial,sans-serif]">
              <Nav />
              <TitleRow />
              <Summary />
              <Minimap />
              <TimelineHeader />
              <SpanBlock
                name="book_ticket"
                duration="4.98ms"
                start="0µs"
                id="4d5995f139a23c7c"
                tags={[
                  { k: "component", v: "Flask", kc: "tracking-[0.35px]", vc: "tracking-[-0.4px]" },
                  { k: "http.method", v: "GET", kc: "tracking-[0.4px]", vc: "tracking-[-1px]" },
                  { k: "http.status_code", v: "200", kc: "tracking-[0.25px]", vc: "tracking-[-0.2px]" },
                  { k: "http.timestamp", v: "07:15:53", kc: "tracking-[0.4px]", vc: "tracking-[-0.3px]" },
                  { k: "http.url", v: "http://10.43.52.109:8000/", kc: "tracking-[0.35px]", vc: "tracking-[0.32px]" },
                ]}
                tagsTail={
                  <span className="ml-[20px] text-[#777]">
                    internal.span<span className="tracking-[1px] text-[#555]">...</span>
                  </span>
                }
              />
              <SpanBlock
                name="backend-api"
                duration="4.25ms"
                start="200µs"
                id="19f4ca2c8a13d44b"
                child
                tags={[
                  { k: "http.counter", v: "5", kc: "tracking-[0.25px]" },
                  { k: "http.url", v: "http://backend:5000", kc: "tracking-[0.15px]", vc: "tracking-[0.45px]" },
                  { k: "internal.span.format", v: "proto", kc: "tracking-[0.25px]" },
                ]}
              />
              <div className="h-0.5 bg-[#bbb]" />
            </div>
            <div className="pointer-events-none absolute inset-y-0 right-0 w-20 bg-linear-to-r from-transparent via-black/4 to-black/17" />
          </div>
        </div>
        <Desktop />
      </div>
    </div>
  );
}
